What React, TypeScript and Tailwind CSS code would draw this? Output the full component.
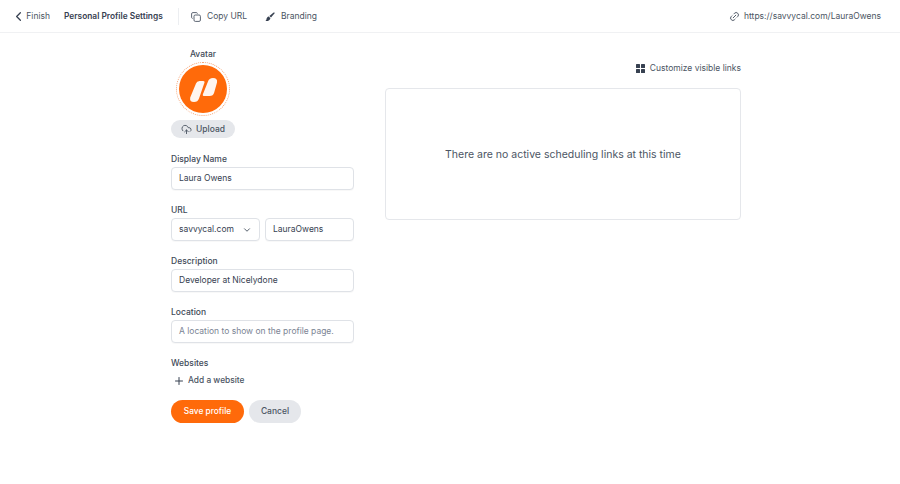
import React from "react";
import { ChevronLeft, Link2, CloudUpload, Plus, ChevronDown } from "lucide-react";

function Field({ label, children }: { label: string; children: React.ReactNode }) {
  return (
    <div className="flex flex-col">
      <label className="text-[8.5px] font-medium leading-[12px] text-[#414a58] mb-[2px]">{label}</label>
      {children}
    </div>
  );
}

function Box({ children, className = "" }: { children: React.ReactNode; className?: string }) {
  return (
    <div className={`h-[23px] flex items-center whitespace-nowrap rounded-[4px] border border-[#dfe2e7] bg-white shadow-[0_1px_1px_rgba(0,0,0,0.03)] text-[8.5px] text-[#374151] ${className}`}>
      {children}
    </div>
  );
}

export default function App() {
  return (
    <div className="w-[900px] h-[484px] overflow-hidden bg-white font-['Inter',sans-serif] text-[#4b5563]">
      <header className="h-[33px] flex items-center border-b border-[#f0f1f3] pl-[11px] pr-[19px] pt-[1px] text-[8.5px] whitespace-nowrap">
        <ChevronLeft size={15} strokeWidth={2} className="text-[#374151]" />
        <span className="w-[24px] text-right text-[#4b5563]">Finish</span>
        <span className="ml-[14px] w-[99px] text-[8.35px] font-semibold text-[#374151]">Personal Profile Settings</span>
        <div className="ml-[15px] h-[17px] w-px bg-[#eceef1]" />
        <svg width="10" height="10" viewBox="0 0 10 10" fill="none" stroke="#4b5563" strokeWidth="0.9" className="ml-[12px]">
          <rect x="3" y="3" width="6.4" height="6.4" rx="1.3" />
          <path d="M6.5 1.6A1.3 1.3 0 0 0 5.3.6H1.9A1.3 1.3 0 0 0 .6 1.9v3.4a1.3 1.3 0 0 0 1 1.2" />
        </svg>
        <span className="ml-[6px] w-[39px]">Copy URL</span>
        <svg width="10" height="10" viewBox="0 0 10 10" fill="#374151" className="ml-[19px]">
          <path d="M9.5.5c.2.2.1.6-.1.9L6 5.6 4.4 4 8.6.6c.3-.2.7-.3.9-.1Z" />
          <path d="M3.8 4.6 5.4 6.2C5.2 7.9 3.2 9.4.4 9c.9-.6 1-1.3 1.1-2 .1-1 1-2.1 2.3-2.4Z" />
        </svg>
        <span className="ml-[6px]">Branding</span>
        <div className="ml-auto flex items-center">
          <Link2 size={11} className="-rotate-45 text-[#4b5563]" />
          <span className="ml-[4px]">https://savvycal.com/LauraOwens</span>
        </div>
      </header>

      <main className="flex pl-[171px] pt-[15px]">
        <section className="w-[183px] flex flex-col">
          <div className="w-[64px] flex flex-col items-center">
            <span className="text-[8.5px] leading-[12px] font-medium text-[#414a58]">Avatar</span>
            <div className="mt-[2px] w-[54px] h-[54px] rounded-full border border-dotted border-[#f59e6c] flex items-center justify-center">
              <div className="w-[48px] h-[48px] rounded-full bg-[#ff6a0a] flex items-center justify-center">
                <svg viewBox="0 0 48 48" width="48" height="48">
                  <g fill="#fff5ee">
                    <path d="M17 18.5Q17.8 16 20.5 16L24.3 16Q26 16 25.5 17.6L20 33.5Q18.8 37 15 37Q10.3 37 11.2 32.5Z" />
                    <path d="M29 16.5Q30 13 34 13Q38.8 13 38 17.5L35.2 27.5Q34.3 31 30.5 31L25 31Q23.4 31 23.8 29.5Z" />
                  </g>
                </svg>
              </div>
            </div>
            <button className="mt-[4px] w-[64px] h-[18px] rounded-full bg-[#e5e7eb] flex items-center justify-center text-[8.5px] font-medium text-[#4b5563]">
              <CloudUpload size={11} className="mr-[4px]" />
              Upload
            </button>
          </div>

          <div className="mt-[15px] flex flex-col gap-[14px]">
            <Field label="Display Name">
              <Box className="px-[7px]">Laura Owens</Box>
            </Field>
            <Field label="URL">
              <div className="flex gap-[5px]">
                <Box className="w-[89px] px-[7px] justify-between">
                  savvycal.com
                  <ChevronDown size={10} strokeWidth={2.25} className="text-[#4b5563]" />
                </Box>
                <Box className="flex-1 px-[7px]">LauraOwens</Box>
              </div>
            </Field>
            <Field label="Description">
              <Box className="px-[7px]">Developer at Nicelydone</Box>
            </Field>
            <Field label="Location">
              <Box className="px-[7px]">
                <span className="text-[#7b8494]">A location to show on the profile page.</span>
              </Box>
            </Field>
            <div className="flex flex-col">
              <span className="text-[8.5px] font-medium leading-[12px] text-[#414a58]">Websites</span>
              <div className="mt-[4px] flex items-center text-[8.35px] font-medium text-[#4b5563] h-[15px]">
                <Plus size={12} className="ml-[2px] text-[#374151]" />
                <span className="ml-[3px]">Add a website</span>
              </div>
            </div>
          </div>

          <div className="mt-[12px] flex gap-[5px]">
            <button className="w-[73px] h-[23px] rounded-full bg-[#ff6a0a] text-white text-[8.35px] font-medium">Save profile</button>
            <button className="w-[52px] h-[23px] rounded-full bg-[#e5e7eb] text-[#4b5563] text-[8.5px] font-medium">Cancel</button>
          </div>
        </section>

        <section className="ml-[31px] w-[356px] flex flex-col">
          <div className="h-[40px] flex items-center justify-end pt-[1px] text-[8.5px] text-[#4b5563]">
            <svg width="9" height="9" viewBox="0 0 9 9" className="mr-[5px]" fill="#374151">
              <rect x="0" y="0" width="4" height="4" rx="0.5" />
              <rect x="5" y="0" width="4" height="4" rx="0.5" />
              <rect x="0" y="5" width="4" height="4" rx="0.5" />
              <rect x="5" y="5" width="4" height="4" rx="0.5" />
            </svg>
            Customize visible links
          </div>
          <div className="h-[132px] rounded-[4px] border border-[#e5e7eb] flex items-center justify-center pt-[1px] text-[10.5px] text-[#4b5563]">
            There are no active scheduling links at this time
          </div>
        </section>
      </main>
    </div>
  );
}
